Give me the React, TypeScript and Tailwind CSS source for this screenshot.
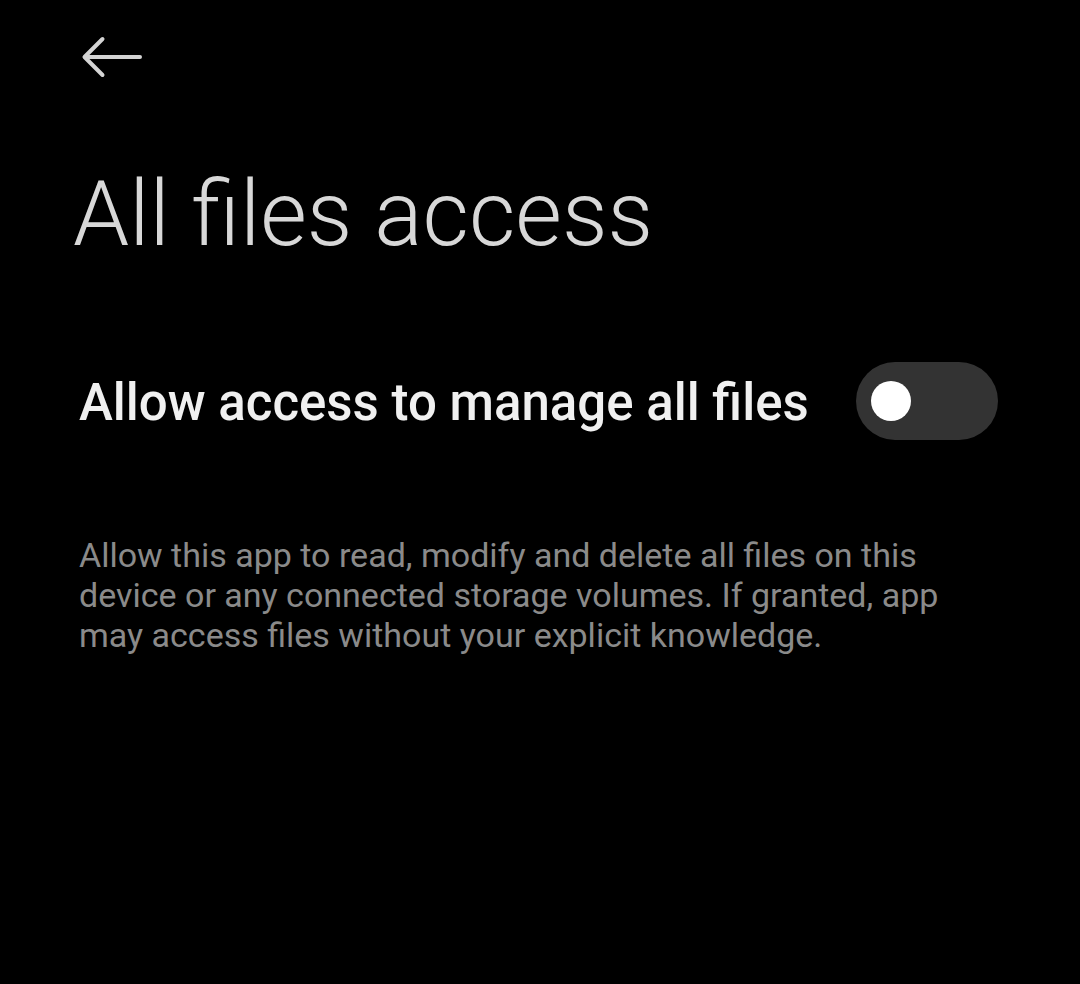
export default function App() {
  return (
    <div
      className="w-[1080px] h-[984px] bg-black overflow-hidden"
      style={{ fontFamily: 'Roboto, "Noto Sans", sans-serif' }}
    >
      {/* Top bar */}
      <div className="pt-[36px] pl-[81px] h-[80px]">
        <svg width="61" height="42" viewBox="0 0 61 42" fill="none">
          <path
            d="M59 21H4M21.5 3L3.5 21L21.5 39"
            stroke="#d4d4d4"
            strokeWidth="4"
            strokeLinecap="round"
            strokeLinejoin="round"
          />
        </svg>
      </div>

      {/* Title */}
      <h1 className="mt-[85px] pl-[73px] text-[90px] leading-[100px] font-light text-[#d8d8d8]">
        All files access
      </h1>

      {/* Toggle row */}
      <div className="mt-[97px] pl-[79px] pr-[82px] flex items-center justify-between">
        <span className="text-[51px] leading-[60px] pt-[3px] font-medium text-[#f0f0f0]">
          Allow access to manage all files
        </span>
        <div className="w-[142px] h-[78px] rounded-full bg-[#333333] flex items-center pl-[15px]">
          <div className="w-[40px] h-[40px] rounded-full bg-white" />
        </div>
      </div>

      {/* Description */}
      <p className="mt-[95px] pl-[79px] pr-[120px] text-[34px] leading-[40px] text-[#8a8a8a]">
        Allow this app to read, modify and delete all files on this device or any connected storage volumes. If granted, app may access files without your explicit knowledge.
      </p>
    </div>
  )
}
